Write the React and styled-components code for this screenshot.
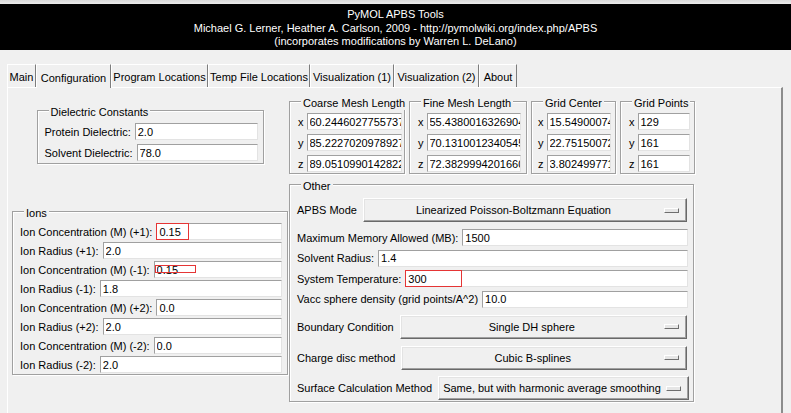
import React from 'react';
import styled, { createGlobalStyle } from 'styled-components';

const Global = createGlobalStyle`
  html, body { margin: 0; padding: 0; background: #f0f0f0; }
  body { font-family: "Liberation Sans", Arial, sans-serif; font-size: 11px; color: #000; }
  #root { width: 791px; height: 413px; overflow: hidden; }
  * { box-sizing: border-box; }
`;

const Window = styled.div`
  width: 791px;
  height: 413px;
  background: #f0f0f0;
  display: flex;
  flex-direction: column;
  overflow: hidden;
`;

const TopEdge = styled.div`
  height: 4px;
  background: linear-gradient(#d9d9d9, #ececec);
`;

const Banner = styled.div`
  height: 46px;
  background: #000;
  color: #fff;
  text-align: center;
  line-height: 13.5px;
  padding-top: 4px;
`;

const TabStrip = styled.div`
  display: flex;
  height: 23px;
  margin: 14px 0 0 7px;
  position: relative;
  z-index: 1;
`;

const Tab = styled.div`
  width: ${(p) => p.$w}px;
  height: ${(p) => (p.$active ? 24 : 23)}px;
  margin-bottom: ${(p) => (p.$active ? -1 : 0)}px;
  border-top: 1px solid #fff;
  border-left: 1px solid #fff;
  border-right: 1px solid #7d7d7d;
  background: #f0f0f0;
  display: flex;
  align-items: center;
  justify-content: center;
  padding-top: 2px;
  white-space: nowrap;
`;

const Panel = styled.div`
  flex: 1;
  margin: 0 8px 0 7px;
  border-top: 1px solid #fff;
  border-left: 1px solid #fff;
  border-right: 2px solid #8c8c8c;
  display: flex;
  align-items: flex-start;
  gap: 1px;
  padding-left: 4px;
`;

const LeftColumn = styled.div`
  width: 276px;
  display: flex;
  flex-direction: column;
  align-items: center;
`;

const RightColumn = styled.div`
  width: 405px;
  display: flex;
  flex-direction: column;
`;

const MeshRow = styled.div`
  display: flex;
  margin-top: 13px;
  gap: 4px;
`;

const Group = styled.div`
  position: relative;
  width: ${(p) => p.$w}px;
  margin-top: ${(p) => p.$mt || 0}px;
  border: 1px solid #a0a0a0;
  box-shadow: inset 1px 1px 0 #fff, 1px 1px 0 #fff;
  padding: ${(p) => p.$pad};
  display: flex;
  flex-direction: column;
  gap: ${(p) => p.$gap}px;
`;

const GroupTitle = styled.span`
  position: absolute;
  top: -5px;
  left: 11px;
  padding: 0 2px;
  line-height: 13px;
  background: #f0f0f0;
  white-space: nowrap;
`;

const Row = styled.div`
  display: flex;
  align-items: center;
  gap: ${(p) => (p.$gap != null ? p.$gap : 4)}px;
  margin-top: ${(p) => p.$mt || 0}px;
`;

const Label = styled.span`
  white-space: nowrap;
`;

const Field = styled.div`
  position: relative;
  flex: 1;
  min-width: 0;
  display: flex;
`;

const Entry = styled.input`
  flex: 1;
  min-width: 0;
  height: 17px;
  margin: 0;
  padding: 0 0 0 2px;
  font: inherit;
  color: #000;
  background: #fff;
  border: 1px solid;
  border-color: #a0a0a0 #e3e3e3 #e3e3e3 #a0a0a0;
  outline: none;
`;

const Mark = styled.div`
  position: absolute;
  left: ${(p) => p.$l}px;
  top: ${(p) => p.$t}px;
  width: ${(p) => p.$w}px;
  height: ${(p) => p.$h}px;
  border: 1px solid #e53535;
  pointer-events: none;
`;

const MenuButton = styled.div`
  flex: 1;
  height: 24px;
  margin-left: 2px;
  margin-right: 1px;
  display: flex;
  align-items: center;
  background: #f0f0f0;
  border: 1px solid;
  border-color: #fff #696969 #696969 #fff;
  box-shadow: inset -1px -1px 0 #a0a0a0, inset 1px 1px 0 #e3e3e3;
  padding: 0 7px 0 4px;
`;

const MenuText = styled.span`
  flex: 1;
  text-align: center;
  white-space: nowrap;
  overflow: hidden;
`;

const Indicator = styled.span`
  width: 15px;
  height: 5px;
  margin-left: 5px;
  background: #e6e6e6;
  border: 1px solid;
  border-color: #fff #6e6e6e #6e6e6e #fff;
`;

const tabs = [
  ['Main', 29],
  ['Configuration', 75, true],
  ['Program Locations', 97],
  ['Temp File Locations', 102],
  ['Visualization (1)', 84],
  ['Visualization (2)', 85],
  ['About', 38],
];

const ions = [
  ['Ion Concentration (M) (+1):', '0.15', { l: 0, t: 0, w: 33, h: 17 }],
  ['Ion Radius (+1):', '2.0'],
  ['Ion Concentration (M) (-1):', '0.15', { l: 1, t: 4, w: 41, h: 8 }],
  ['Ion Radius (-1):', '1.8'],
  ['Ion Concentration (M) (+2):', '0.0'],
  ['Ion Radius (+2):', '2.0'],
  ['Ion Concentration (M) (-2):', '0.0'],
  ['Ion Radius (-2):', '2.0'],
];

const meshes = [
  { title: 'Coarse Mesh Length', w: 116, pad: '11px 2px 1px 8px', vals: ['60.2446027755737', '85.2227020978927', '89.0510990142822'] },
  { title: 'Fine Mesh Length', w: 118, pad: '11px 5px 1px 8px', vals: ['55.4380016326904', '70.1310012340545', '72.3829994201660'] },
  { title: 'Grid Center', w: 85, pad: '11px 4px 1px 6px', vals: ['15.5490007400513', '22.7515007209778', '3.80249977111816'] },
  { title: 'Grid Points', w: 75, pad: '11px 4px 1px 8px', vals: ['129', '161', '161'] },
];

const other = [
  { menu: true, label: 'APBS Mode', value: 'Linearized Poisson-Boltzmann Equation', mt: 0 },
  { label: 'Maximum Memory Allowed (MB):', value: '1500', mt: 7 },
  { label: 'Solvent Radius:', value: '1.4', mt: 3.5 },
  { label: 'System Temperature:', value: '300', mt: 3.5, mark: { l: 0, t: 0, w: 57, h: 17 } },
  { label: 'Vacc sphere density (grid points/A^2)', value: '10.0', mt: 3.5 },
  { menu: true, label: 'Boundary Condition', value: 'Single DH sphere', mt: 7 },
  { menu: true, label: 'Charge disc method', value: 'Cubic B-splines', mt: 7 },
  { menu: true, label: 'Surface Calculation Method', value: 'Same, but with harmonic average smoothing', mt: 6.5 },
];

function TextField({ value, mark }) {
  return (
    <Field>
      <Entry readOnly value={value} />
      {mark && <Mark $l={mark.l} $t={mark.t} $w={mark.w} $h={mark.h} />}
    </Field>
  );
}

export default function App() {
  return (
    <Window>
      <Global />
      <TopEdge />
      <Banner>
        <div>PyMOL APBS Tools</div>
        <div>Michael G. Lerner, Heather A. Carlson, 2009 - http://pymolwiki.org/index.php/APBS</div>
        <div>(incorporates modifications by Warren L. DeLano)</div>
      </Banner>
      <TabStrip>
        {tabs.map(([name, w, active]) => (
          <Tab key={name} $w={w} $active={active}>{name}</Tab>
        ))}
      </TabStrip>
      <Panel>
        <LeftColumn>
          <Group $w={227} $mt={22} $pad="12px 5px 2px 7px" $gap={4}>
            <GroupTitle>Dielectric Constants</GroupTitle>
            <Row>
              <Label>Protein Dielectric:</Label>
              <TextField value="2.0" />
            </Row>
            <Row>
              <Label>Solvent Dielectric:</Label>
              <TextField value="78.0" />
            </Row>
          </Group>
          <Group $w={276} $mt={47} $pad="11px 5px 1px 7px" $gap={2}>
            <GroupTitle>Ions</GroupTitle>
            {ions.map(([label, value, mark]) => (
              <Row key={label}>
                <Label>{label}</Label>
                <TextField value={value} mark={mark} />
              </Row>
            ))}
          </Group>
        </LeftColumn>
        <RightColumn>
          <MeshRow>
            {meshes.map((m) => (
              <Group key={m.title} $w={m.w} $pad={m.pad} $gap={4}>
                <GroupTitle>{m.title}</GroupTitle>
                {['x', 'y', 'z'].map((axis, i) => (
                  <Row key={axis} $gap={3}>
                    <Label>{axis}</Label>
                    <TextField value={m.vals[i]} />
                  </Row>
                ))}
              </Group>
            ))}
          </MeshRow>
          <Group $w={405} $mt={10} $pad="13px 5px 1px 7px" $gap={0}>
            <GroupTitle>Other</GroupTitle>
            {other.map((r) => (
              <Row key={r.label} $mt={r.mt}>
                <Label>{r.label}</Label>
                {r.menu ? (
                  <MenuButton>
                    <MenuText>{r.value}</MenuText>
                    <Indicator />
                  </MenuButton>
                ) : (
                  <TextField value={r.value} mark={r.mark} />
                )}
              </Row>
            ))}
          </Group>
        </RightColumn>
      </Panel>
    </Window>
  );
}
